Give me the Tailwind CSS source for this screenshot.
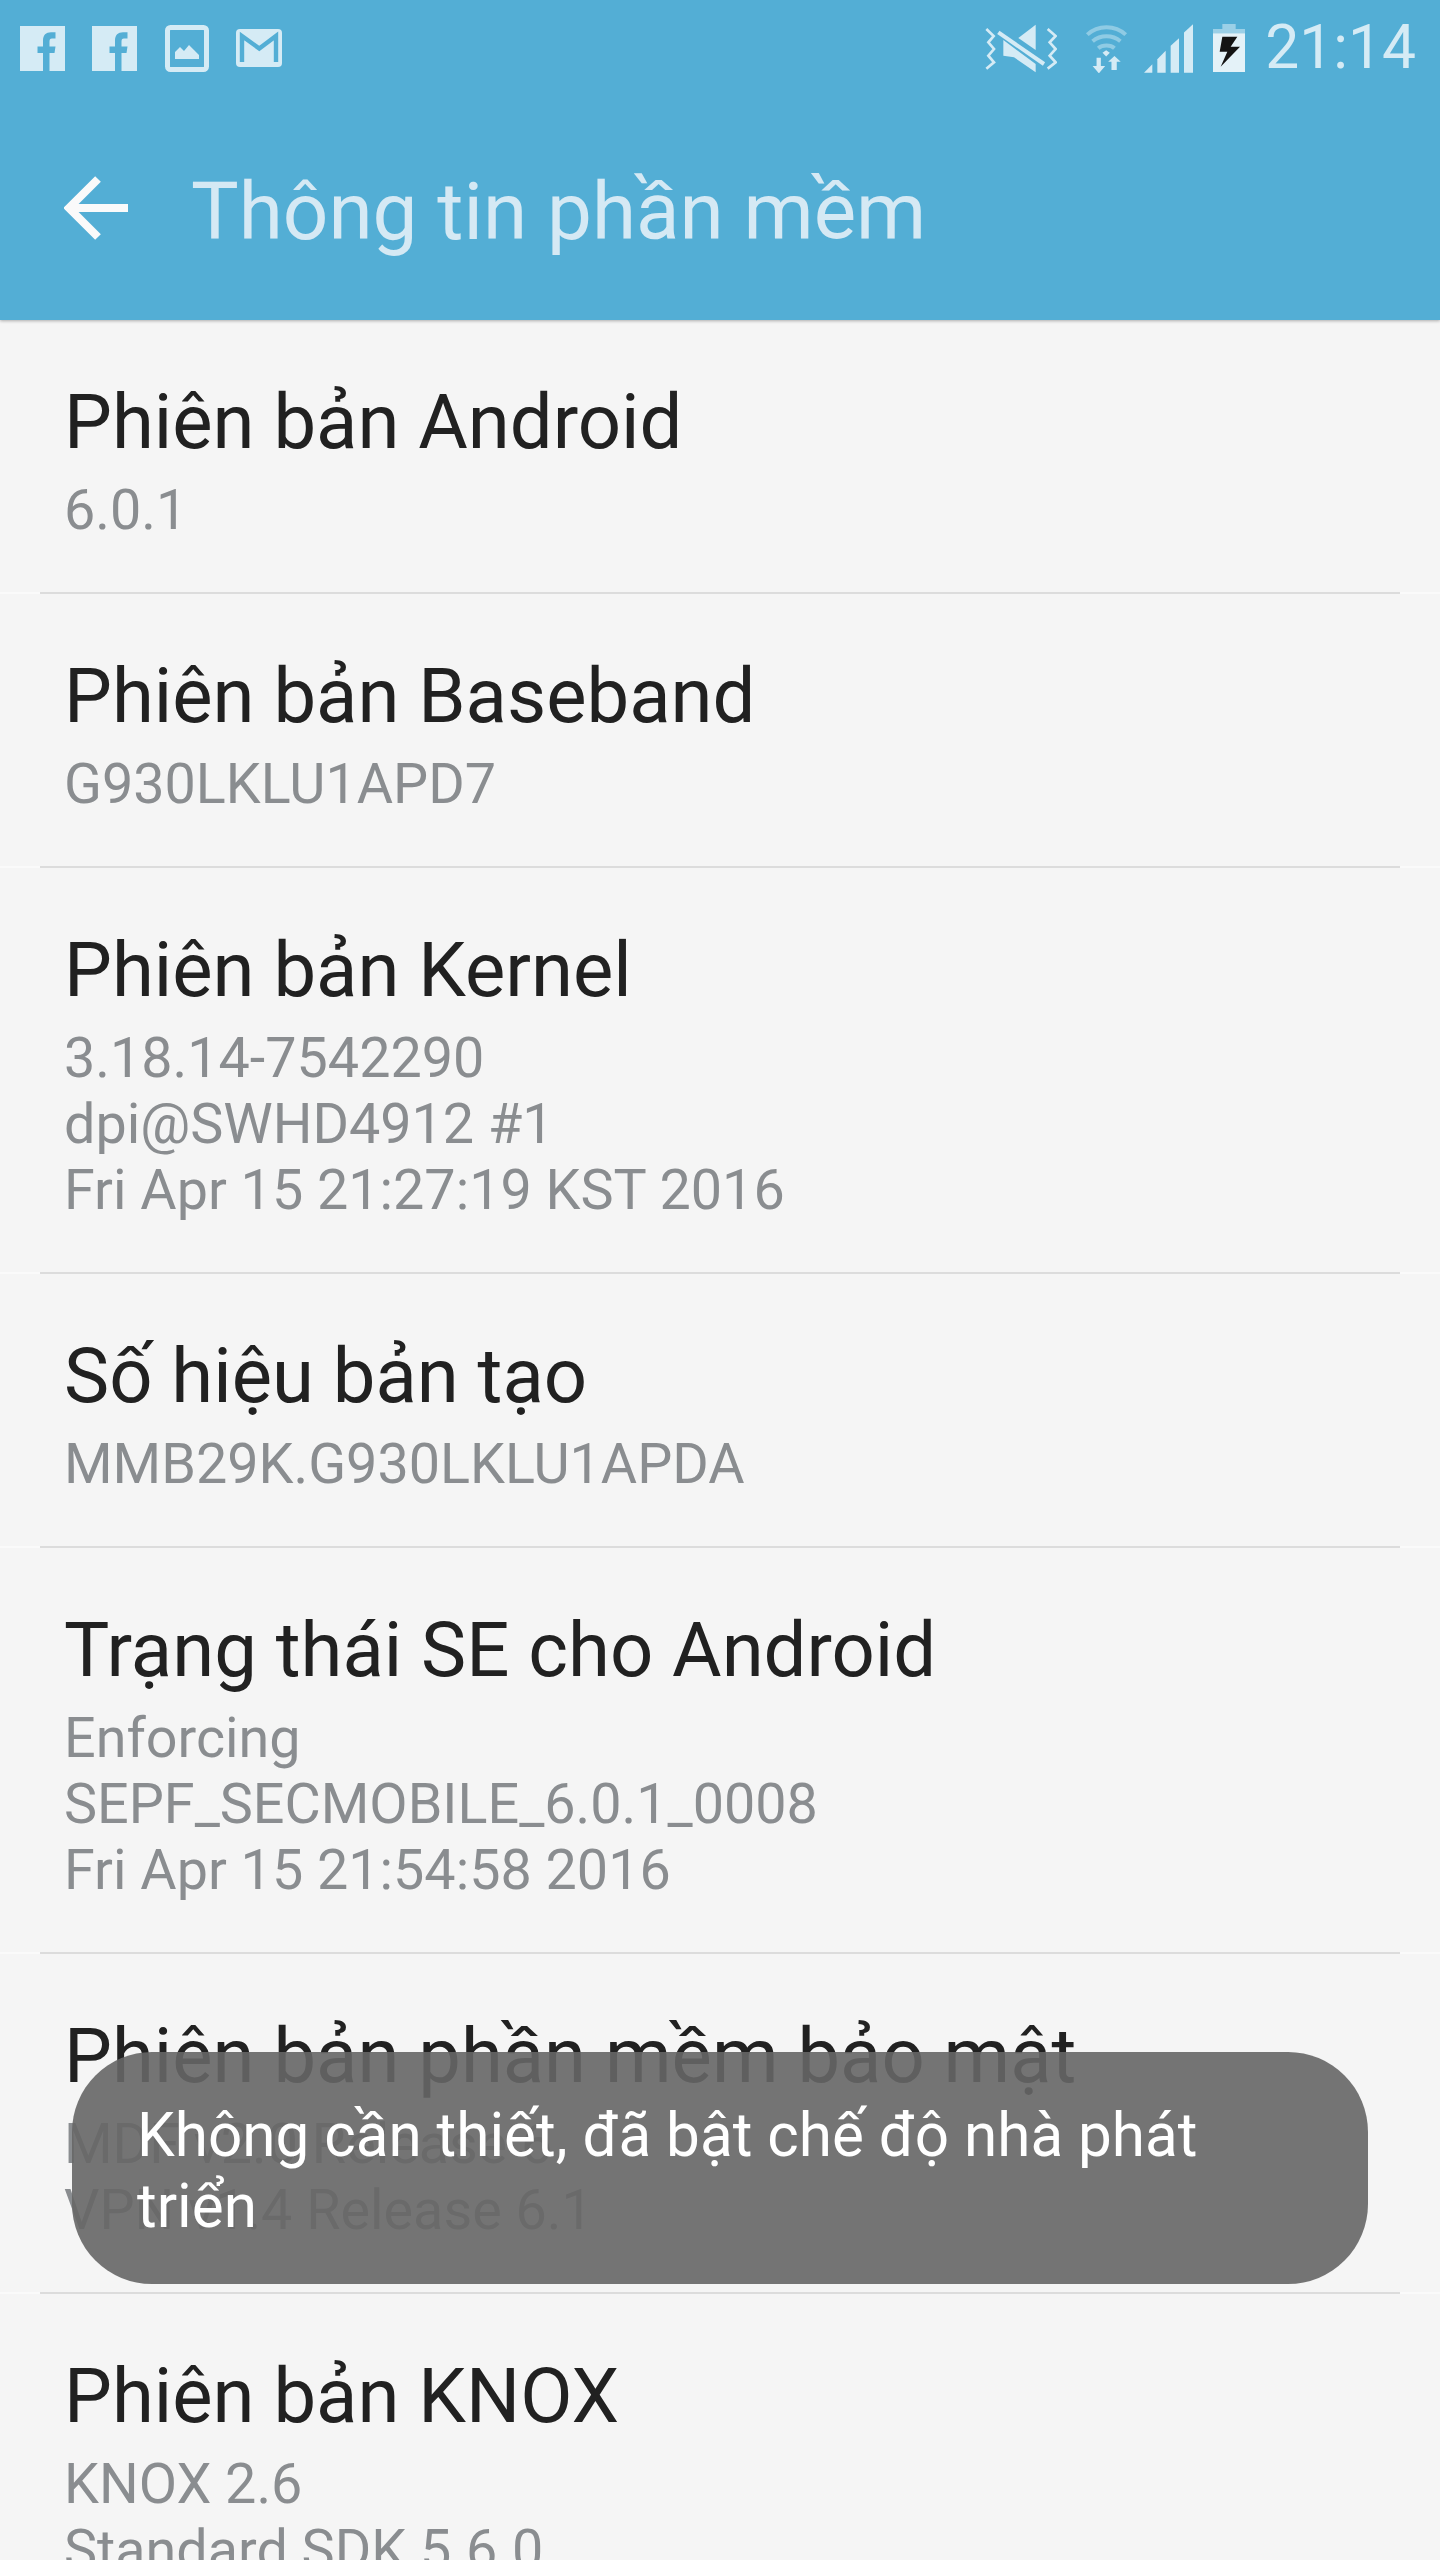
<!DOCTYPE html>
<html lang="vi">
<head>
    <meta charset="UTF-8">
    <meta name="viewport" content="width=device-width, initial-scale=1.0">
    <title>Thông tin phần mềm</title>
    <script src="https://cdn.jsdelivr.net/npm/@tailwindcss/browser@4"></script>
</head>
<body class="font-[Roboto,sans-serif] bg-[#f5f5f5]">
    <div class="relative h-[2560px] w-[1440px] overflow-hidden">
        <div class="relative z-10 bg-[#53aed5] shadow-[0_1px_3px_rgba(0,0,0,0.3)]">
            <!-- Status bar -->
            <div class="flex h-[96px] items-center justify-between pl-[20px] pr-[24px] text-[#d5ebf5]">
                <div class="flex items-center">
                    <svg class="h-[45px] w-[45px]" viewBox="0 0 45 45"><path fill="#d5ebf5" fill-rule="evenodd" d="M0 0H45V45H0Z M23 45V27H17.5V20.5H23V15C23 9 26 6.3 31 6.3H35.5V12.5H32C30 12.5 29.5 13.5 29.5 15.5V20.5H35.5L34.5 27H29.5V45Z"/></svg>
                    <svg class="ml-[27px] h-[45px] w-[45px]" viewBox="0 0 45 45"><path fill="#d5ebf5" fill-rule="evenodd" d="M0 0H45V45H0Z M23 45V27H17.5V20.5H23V15C23 9 26 6.3 31 6.3H35.5V12.5H32C30 12.5 29.5 13.5 29.5 15.5V20.5H35.5L34.5 27H29.5V45Z"/></svg>
                    <svg class="ml-[28px] h-[47px] w-[44px]" viewBox="0 0 44 47"><rect x="2.5" y="2.5" width="39" height="42" rx="3" fill="none" stroke="#d5ebf5" stroke-width="5"/><polygon fill="#d5ebf5" points="10,34 10,27 15,22 19,26 24,20 29,25 34,30 34,34"/></svg>
                    <svg class="ml-[27px] h-[38px] w-[46px]" viewBox="0 0 46 38"><rect width="46" height="38" rx="4" fill="#d5ebf5"/><polyline points="6,33 6,7 23.3,19.5 40,7 40,33" fill="none" stroke="#53aed5" stroke-width="4.4"/></svg>
                </div>
                <div class="flex items-center">
                    <svg class="h-[49px] w-[72px]" viewBox="78 70 216 147">
                        <polyline points="82,85 104,106 88,125 105,145 88,165 105,185 82,204" fill="none" stroke="#d5ebf5" stroke-width="8"/>
                        <polyline points="266,85 290,106 272,125 290,145 272,165 290,185 266,204" fill="none" stroke="#d5ebf5" stroke-width="8"/>
                        <line x1="118" y1="95" x2="255" y2="190" stroke="#d5ebf5" stroke-width="12"/>
                        <polygon fill="#d5ebf5" points="230,72 230,148 178,112"/>
                        <polygon fill="#d5ebf5" points="133,118 133,165 165,170 230,215 230,190"/>
                    </svg>
                    <svg class="ml-[28px] h-[49px] w-[43px]" viewBox="378 68 128 148">
                        <path d="M384 100C416 70 468 70 500 100" fill="none" stroke="#8fcbe4" stroke-width="12"/>
                        <path d="M400 120C424 100 460 100 484 120" fill="none" stroke="#8fcbe4" stroke-width="12"/>
                        <path d="M417 141C430 130 454 130 466 141" fill="none" stroke="#8fcbe4" stroke-width="12"/>
                        <polygon fill="#d5ebf5" points="430,155 441,147 452,155 441,166"/>
                        <polygon fill="#d5ebf5" points="412,170 425,170 425,195 438,195 419,217 400,195 412,195"/>
                        <polygon fill="#d5ebf5" points="466,165 485,182 473,182 473,207 457,207 457,182 447,182"/>
                    </svg>
                    <svg class="ml-[16px] h-[49px] w-[49px]" viewBox="555 70 147 146">
                        <polygon fill="#d5ebf5" points="580,190 580,216 555,216"/>
                        <polygon fill="#d5ebf5" points="595,216 595,175 620,150 620,216"/>
                        <polygon fill="#d5ebf5" points="635,216 635,135 660,112 660,216"/>
                        <polygon fill="#d5ebf5" points="675,216 675,95 702,70 702,216"/>
                    </svg>
                    <svg class="ml-[20px] h-[48px] w-[32px]" viewBox="762 72 96 144">
                        <rect x="790" y="72" width="40" height="16" fill="#9bd0e7"/>
                        <rect x="762" y="87" width="96" height="14" fill="#9bd0e7"/>
                        <rect x="762" y="100" width="96" height="116" fill="#e4f2f8"/>
                        <polygon fill="#141414" points="790,110 835,110 815,140 843,140 785,200 805,155 782,155"/>
                    </svg>
                    <span class="ml-[20px] text-[60.5px] leading-[72px]">21:14</span>
                </div>
            </div>

            <!-- Title bar -->
            <div class="flex h-[224px] items-center pl-[64px]">
                <svg class="h-[64px] w-[64px]" viewBox="0 0 64 64"><path d="M64 32H6M34 3L5 32L34 61" fill="none" stroke="#fafafa" stroke-width="8"/></svg>
                <h1 class="ml-[63px] pt-[8px] text-[80px] leading-[94px] font-normal text-[#d5e9f4]">Thông tin phần mềm</h1>
            </div>
        </div>

        <!-- Rows -->
        <div class="border-b-2 border-[#fafafa]">
            <div class="mx-[40px] -mb-[2px] border-b-2 border-[#dcdcdc] pb-[49px] pl-[24px] pt-[58px]">
                <div class="text-[76px] leading-[89px] text-[#212121]">Phiên bản Android</div>
                <div class="mt-[10px] text-[55.7px] leading-[66px] text-[#8a8d90]">6.0.1</div>
            </div>
        </div>
        <div class="border-b-2 border-[#fafafa]">
            <div class="mx-[40px] -mb-[2px] border-b-2 border-[#dcdcdc] pb-[49px] pl-[24px] pt-[58px]">
                <div class="text-[76px] leading-[89px] text-[#212121]">Phiên bản Baseband</div>
                <div class="mt-[10px] text-[55.7px] leading-[66px] text-[#8a8d90]">G930LKLU1APD7</div>
            </div>
        </div>
        <div class="border-b-2 border-[#fafafa]">
            <div class="mx-[40px] -mb-[2px] border-b-2 border-[#dcdcdc] pb-[49px] pl-[24px] pt-[58px]">
                <div class="text-[76px] leading-[89px] text-[#212121]">Phiên bản Kernel</div>
                <div class="mt-[10px] text-[55.7px] leading-[66px] text-[#8a8d90]">3.18.14-7542290<br>dpi@SWHD4912 #1<br>Fri Apr 15 21:27:19 KST 2016</div>
            </div>
        </div>
        <div class="border-b-2 border-[#fafafa]">
            <div class="mx-[40px] -mb-[2px] border-b-2 border-[#dcdcdc] pb-[49px] pl-[24px] pt-[58px]">
                <div class="text-[76px] leading-[89px] text-[#212121]">Số hiệu bản tạo</div>
                <div class="mt-[10px] text-[55.7px] leading-[66px] text-[#8a8d90]">MMB29K.G930LKLU1APDA</div>
            </div>
        </div>
        <div class="border-b-2 border-[#fafafa]">
            <div class="mx-[40px] -mb-[2px] border-b-2 border-[#dcdcdc] pb-[49px] pl-[24px] pt-[58px]">
                <div class="text-[76px] leading-[89px] text-[#212121]">Trạng thái SE cho Android</div>
                <div class="mt-[10px] text-[55.7px] leading-[66px] text-[#8a8d90]">Enforcing<br>SEPF_SECMOBILE_6.0.1_0008<br>Fri Apr 15 21:54:58 2016</div>
            </div>
        </div>
        <div class="border-b-2 border-[#fafafa]">
            <div class="mx-[40px] -mb-[2px] border-b-2 border-[#dcdcdc] pb-[49px] pl-[24px] pt-[58px]">
                <div class="text-[76px] leading-[89px] text-[#212121]">Phiên bản phần mềm bảo mật</div>
                <div class="mt-[10px] text-[55.7px] leading-[66px] text-[#8a8d90]">MDF v2.0 Release 6<br>VPN v1.4 Release 6.1</div>
            </div>
        </div>
        <div class="px-[64px] pt-[58px]">
            <div class="text-[76px] leading-[89px] text-[#212121]">Phiên bản KNOX</div>
            <div class="mt-[10px] text-[55.7px] leading-[66px] text-[#8a8d90]">KNOX 2.6<br>Standard SDK 5.6.0</div>
        </div>

        <!-- Toast -->
        <div class="absolute left-[72px] top-[2052px] h-[232px] w-[1296px] rounded-[80px] bg-[#666666]/90 px-[65px] pt-[48px] text-[60.2px] leading-[71px] text-white">Không cần thiết, đã bật chế độ nhà phát triển</div>
    </div>
</body>
</html>
